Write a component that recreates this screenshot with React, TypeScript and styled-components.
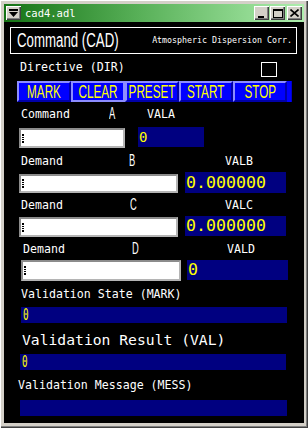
import styled, { createGlobalStyle } from 'styled-components';

const Global = createGlobalStyle`
  html, body {
    margin: 0;
    padding: 0;
    background: #d4d0c8;
  }
  body {
    width: 308px;
    height: 428px;
    overflow: hidden;
  }
`;

const MONO = `'DejaVu Sans Mono', 'Liberation Mono', monospace`;
const SANS = `'DejaVu Sans ExtraLight', 'Liberation Sans', Arial, sans-serif`;

const Window = styled.div`
  width: 308px;
  height: 428px;
  box-sizing: border-box;
  padding: 4px 4px 5px 4px;
  background: #d4d0c8;
  box-shadow: inset 1px 1px #ffffff, inset -1px -1px #404040, inset -2px -2px #808080;
  display: flex;
  flex-direction: column;
`;

const TitleBar = styled.div`
  height: 18px;
  display: flex;
  align-items: center;
  padding: 0 2px;
  background: linear-gradient(to right, #157315 0%, #58b058 45%, #aeeeae 100%);
`;

const TitleText = styled.span`
  margin-left: 4px;
  color: #ffffff;
  font-family: ${MONO};
  font-size: 10.5px;
  line-height: 14px;
`;

const Spacer = styled.div`
  flex: 1;
`;

const TitleButton = styled.div<{ $gap?: number }>`
  width: 15px;
  height: 14px;
  box-sizing: border-box;
  margin-left: ${(p) => p.$gap ?? 0}px;
  background: #d4d0c8;
  box-shadow: inset 1px 1px #ffffff, inset -1px -1px #404040, inset -2px -2px #808080;
  display: flex;
  align-items: center;
  justify-content: center;
  svg {
    display: block;
  }
`;

const Content = styled.div`
  flex: 1;
  background: #000000;
  display: flex;
  flex-direction: column;
`;

const Header = styled.div`
  margin: 5px 0 0 6px;
  width: 287px;
  height: 27px;
  box-sizing: border-box;
  border: 1px solid #ffffff;
  display: flex;
  align-items: center;
  justify-content: space-between;
  padding: 0 4px 0 6px;
  color: #ffffff;
`;

/* condensed text: the box keeps the squeezed width so the flow is right */
const NarrowBox = styled.span<{ $w: number; $center?: boolean }>`
  display: inline-flex;
  justify-content: ${(p) => (p.$center ? 'center' : 'flex-start')};
  width: ${(p) => p.$w}px;
  overflow: visible;
  flex: none;
`;

const Narrow = styled.span<{ $size: number; $scale: number; $origin?: string; $color?: string }>`
  display: inline-block;
  font-family: ${SANS};
  font-size: ${(p) => p.$size}px;
  line-height: 1;
  white-space: nowrap;
  color: ${(p) => p.$color ?? '#ffffff'};
  transform: scaleX(${(p) => p.$scale});
  transform-origin: ${(p) => p.$origin ?? 'left'} center;
`;

const SmallText = styled.span`
  font-family: ${MONO};
  font-size: 8.3px;
  line-height: 12px;
  white-space: nowrap;
  margin-bottom: 2px;
`;

const Row = styled.div<{ $top: number; $height: number }>`
  margin-top: ${(p) => p.$top}px;
  height: ${(p) => p.$height}px;
  display: flex;
  align-items: flex-start;
  color: #ffffff;
`;

const Label = styled.span<{ $x: number; $w?: number }>`
  margin-left: ${(p) => p.$x}px;
  width: ${(p) => (p.$w ? `${p.$w}px` : 'auto')};
  flex: none;
  font-family: ${MONO};
  font-size: 11.6px;
  line-height: 15px;
  white-space: nowrap;
  color: #ffffff;
`;

const BigLabel = styled(Label)`
  font-size: 14.7px;
  line-height: 18px;
`;

const Letter = styled.span`
  width: 8px;
  flex: none;
  margin-top: -2px;
  display: flex;
`;

const CheckBox = styled.div`
  margin: 2px 27px 0 auto;
  width: 16px;
  height: 15px;
  box-sizing: border-box;
  border: 1px solid #ffffff;
`;

const Strip = styled.div`
  margin: 3px 0 0 13px;
  width: 275px;
  height: 21px;
  display: flex;
  background: #0000ff;
  box-shadow: inset -1px 0 #0000c8;
`;

const Button = styled.div<{ $pressed?: boolean }>`
  width: 54px;
  height: 21px;
  box-sizing: border-box;
  border: 2px solid;
  border-color: ${(p) =>
    p.$pressed ? '#8c8cff #8c8cff #8c8cff #8c8cff' : '#8c8cff #0000a8 #0000a8 #8c8cff'};
  background: #0000ff;
  display: flex;
  align-items: center;
  justify-content: center;
  overflow: visible;
`;

const Entry = styled.div<{ $x: number; $y: number; $w: number; $h: number }>`
  margin-left: ${(p) => p.$x}px;
  margin-top: ${(p) => p.$y}px;
  width: ${(p) => p.$w}px;
  height: ${(p) => p.$h}px;
  flex: none;
  box-sizing: border-box;
  border: 2px solid;
  border-color: #8c8c8c #b4b4b4 #b4b4b4 #8c8c8c;
  background: #ffffff;
  display: flex;
  align-items: center;
  padding-left: 1px;
`;

const Cursor = styled.span`
  width: 2px;
  height: 9px;
  background: repeating-linear-gradient(to bottom, #000 0 1px, #fff 1px 2px);
  border-top: 1px solid #000;
  border-bottom: 1px solid #000;
  box-sizing: border-box;
`;

const Readout = styled.div<{ $x: number; $y: number; $w: number; $h: number; $size?: number }>`
  margin-left: ${(p) => p.$x}px;
  margin-top: ${(p) => p.$y}px;
  width: ${(p) => p.$w}px;
  height: ${(p) => p.$h}px;
  flex: none;
  box-sizing: border-box;
  background: #000080;
  color: #ffff00;
  font-family: ${MONO};
  font-size: ${(p) => p.$size ?? 13}px;
  line-height: ${(p) => p.$h}px;
  padding-left: 1px;
  white-space: nowrap;
  overflow: hidden;
`;

const Bar = styled(Readout)`
  font-size: 15px;
  padding-left: 2px;
`;

const Thin = styled.span`
  display: inline-block;
  transform: scaleX(0.62);
  transform-origin: left center;
`;

const MenuIcon = () => (
  <svg width="9" height="8" viewBox="0 0 9 8">
    <rect x="0" y="0" width="9" height="2" fill="#000" />
    <polygon points="0,3 9,3 4.5,8" fill="#000" />
  </svg>
);

const MinIcon = () => (
  <svg width="9" height="9" viewBox="0 0 9 9">
    <rect x="1" y="7" width="6" height="2" fill="#000" />
  </svg>
);

const MaxIcon = () => (
  <svg width="10" height="9" viewBox="0 0 10 9">
    <rect x="0.5" y="0.5" width="9" height="8" fill="none" stroke="#000" />
    <rect x="0" y="0" width="10" height="2" fill="#000" />
  </svg>
);

const CloseIcon = () => (
  <svg width="9" height="8" viewBox="0 0 9 8">
    <path d="M0.5 0.5 L8.5 7.5 M8.5 0.5 L0.5 7.5" stroke="#000" strokeWidth="1.6" />
  </svg>
);

const buttons = ['MARK', 'CLEAR', 'PRESET', 'START', 'STOP'];

type DemandRow = {
  name: string;
  letter: string;
  field: string;
  labelX: number;
  letterX: number;
  fieldX: number;
  rowTop: number;
  entry: { x: number; y: number; w: number; h: number };
  readout: { x: number; y: number; w: number; h: number };
  value: string;
  big: boolean;
  fieldsHeight: number;
};

const rows: DemandRow[] = [
  {
    name: 'Command', letter: 'A', field: 'VALA', labelX: 17, letterX: 105, fieldX: 143, rowTop: 5,
    entry: { x: 15, y: 6, w: 106, h: 20 }, readout: { x: 13, y: 5, w: 66, h: 20 },
    value: '0', big: false, fieldsHeight: 26,
  },
  {
    name: 'Demand', letter: 'B', field: 'VALB', labelX: 17, letterX: 125, fieldX: 221, rowTop: 6,
    entry: { x: 15, y: 5, w: 159, h: 19 }, readout: { x: 7, y: 3, w: 101, h: 21 },
    value: '0.000000', big: true, fieldsHeight: 24,
  },
  {
    name: 'Demand', letter: 'C', field: 'VALC', labelX: 17, letterX: 126, fieldX: 221, rowTop: 5,
    entry: { x: 15, y: 4, w: 159, h: 20 }, readout: { x: 7, y: 3, w: 101, h: 20 },
    value: '0.000000', big: true, fieldsHeight: 24,
  },
  {
    name: 'Demand', letter: 'D', field: 'VALD', labelX: 19, letterX: 128, fieldX: 223, rowTop: 5,
    entry: { x: 17, y: 3, w: 160, h: 21 }, readout: { x: 6, y: 3, w: 101, h: 20 },
    value: '0', big: true, fieldsHeight: 24,
  },
];

export default function App() {
  return (
    <>
      <Global />
      <Window>
        <TitleBar>
          <TitleButton><MenuIcon /></TitleButton>
          <TitleText>cad4.adl</TitleText>
          <Spacer />
          <TitleButton><MinIcon /></TitleButton>
          <TitleButton $gap={1}><MaxIcon /></TitleButton>
          <TitleButton $gap={2}><CloseIcon /></TitleButton>
        </TitleBar>
        <Content>
          <Header>
            <NarrowBox $w={102}>
              <Narrow $size={19.5} $scale={0.68}>Command (CAD)</Narrow>
            </NarrowBox>
            <SmallText>Atmospheric Dispersion Corr.</SmallText>
          </Header>

          <Row $top={6} $height={18}>
            <Label $x={16}>Directive (DIR)</Label>
            <CheckBox />
          </Row>

          <Strip>
            {buttons.map((b) => (
              <Button key={b} $pressed={b === 'CLEAR'}>
                <Narrow $size={18} $scale={0.65} $origin="center" $color="#ffff00">{b}</Narrow>
              </Button>
            ))}
          </Strip>

          {rows.map((r) => (
            <div key={r.field}>
              <Row $top={r.rowTop} $height={15}>
                <Label $x={r.labelX} $w={r.letterX - r.labelX}>{r.name}</Label>
                <Letter>
                  <Narrow $size={17} $scale={0.55}>{r.letter}</Narrow>
                </Letter>
                <Label $x={r.fieldX - r.letterX - 8}>{r.field}</Label>
              </Row>
              <Row $top={0} $height={r.fieldsHeight}>
                <Entry $x={r.entry.x} $y={r.entry.y} $w={r.entry.w} $h={r.entry.h}>
                  <Cursor />
                </Entry>
                <Readout
                  $x={r.readout.x}
                  $y={r.readout.y}
                  $w={r.readout.w}
                  $h={r.readout.h}
                  $size={r.big ? 16.6 : 14}
                >
                  {r.value}
                </Readout>
              </Row>
            </div>
          ))}

          <Row $top={6} $height={15}>
            <Label $x={17}>Validation State (MARK)</Label>
          </Row>
          <Row $top={5} $height={16}>
            <Bar $x={17} $y={0} $w={266} $h={16}><Thin>0</Thin></Bar>
          </Row>

          <Row $top={8} $height={18}>
            <BigLabel $x={18}>Validation Result (VAL)</BigLabel>
          </Row>
          <Row $top={5} $height={16}>
            <Bar $x={16} $y={0} $w={266} $h={16}><Thin>0</Thin></Bar>
          </Row>

          <Row $top={8} $height={15}>
            <Label $x={14}>Validation Message (MESS)</Label>
          </Row>
          <Row $top={7} $height={16}>
            <Bar $x={16} $y={0} $w={267} $h={16} />
          </Row>
        </Content>
      </Window>
    </>
  );
}
